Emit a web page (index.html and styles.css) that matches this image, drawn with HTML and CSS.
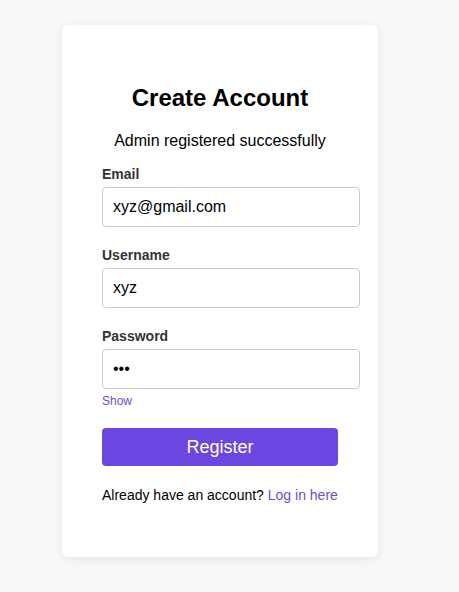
FILE: index.html
```html
<!DOCTYPE html>
<html lang="en">
<head>
<meta charset="utf-8">
<title>Create Account</title>
<link rel="stylesheet" href="styles.css">
</head>
<body>
<div class="card">
  <h2 class="title">Create Account</h2>
  <p class="message">Admin registered successfully</p>
  <form class="form">
    <div class="group">
      <label class="label">Email</label>
      <input class="input" type="email" value="xyz@gmail.com">
    </div>
    <div class="group">
      <label class="label">Username</label>
      <input class="input" type="text" value="xyz">
    </div>
    <div class="group group-last">
      <label class="label">Password</label>
      <input class="input" type="password" value="abc">
      <span class="show">Show</span>
    </div>
    <button class="button" type="button">Register</button>
  </form>
  <p class="footer">Already have an account? <a class="link" href="#">Log in here</a></p>
</div>
</body>
</html>
```

FILE: styles.css
```css
html, body {
  margin: 0;
  padding: 0;
}
body {
  background: #f8f8f8;
  font-family: "Liberation Sans", Arial, sans-serif;
  display: flex;
  justify-content: center;
  align-items: flex-start;
  padding: 25px 19px 0 0;
  min-height: 592px;
  box-sizing: border-box;
}
.card {
  width: 236px;
  padding: 40px 40px 54px 40px;
  background: #fff;
  border-radius: 6px;
  box-shadow: 0 2px 10px rgba(0, 0, 0, 0.08);
}
.title {
  margin: 19px 0 20px;
  font-size: 24px;
  font-weight: bold;
  text-align: center;
  color: #000;
}
.message {
  margin: 0 0 16px;
  font-size: 16px;
  text-align: center;
  color: #000;
}
.form {
  margin: 0;
}
.group {
  margin-bottom: 20px;
}
.group-last {
  margin-bottom: 20px;
}
.label {
  display: block;
  font-size: 14px;
  font-weight: bold;
  color: #333;
  margin-bottom: 5px;
}
.input {
  display: block;
  width: 100%;
  padding: 10px;
  font-family: "Liberation Sans", Arial, sans-serif;
  font-size: 16px;
  color: #000;
  border: 1px solid #ccc;
  border-radius: 4px;
  background: #fff;
  margin: 0;
  height: 18px;
  line-height: 18px;
}
.show {
  display: block;
  margin-top: 5px;
  font-size: 12px;
  color: #6b4fd6;
  cursor: pointer;
}
.button {
  display: block;
  width: 100%;
  height: 38px;
  padding: 0;
  border: none;
  border-radius: 4px;
  background: #6b46e1;
  color: #fff;
  font-family: "Liberation Sans", Arial, sans-serif;
  font-size: 18px;
  cursor: pointer;
}
.footer {
  margin: 21px 0 0;
  font-size: 14px;
  color: #000;
}
.link {
  color: #6b4fd6;
  text-decoration: none;
}
```
